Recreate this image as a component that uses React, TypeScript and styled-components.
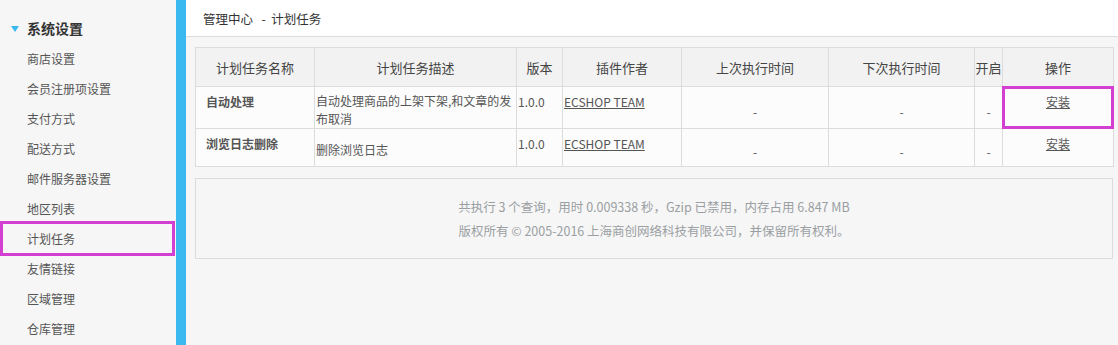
import React from "react";
import styled, { createGlobalStyle, css } from "styled-components";

const Global = createGlobalStyle`
  html, body { margin: 0; padding: 0; overflow: hidden; }
  body { font-family: "Noto Sans CJK SC", "Liberation Sans", sans-serif; background: #f6f6f6; }
  * { box-sizing: border-box; }
`;

const ACCENT = "#d33fd1";
const BLUE = "#3ab8f0";

const Page = styled.div`
  display: flex;
  height: 100vh;
  width: 100vw;
  overflow: hidden;
`;

const Sidebar = styled.nav`
  width: 176px;
  flex: none;
  background: #f6f6f6;
  padding-top: 13px;
  display: flex;
  flex-direction: column;
`;

const GroupTitle = styled.div`
  height: 30px;
  display: flex;
  align-items: center;
  padding-left: 11px;
  gap: 8px;
  font-size: 14px;
  font-weight: 700;
  color: #333;
`;

const Caret = styled.span`
  width: 0;
  height: 0;
  border-left: 4.5px solid transparent;
  border-right: 4.5px solid transparent;
  border-top: 6px solid ${BLUE};
  margin-top: 1px;
`;

const NavItem = styled.div<{ $marked?: boolean }>`
  position: relative;
  height: 30px;
  display: flex;
  align-items: center;
  padding-left: 27px;
  font-size: 12px;
  color: #555;
  ${(p) =>
    p.$marked &&
    css`
      &::after {
        content: "";
        position: absolute;
        left: 0;
        right: 1px;
        top: -2px;
        bottom: -3px;
        border: 3px solid ${ACCENT};
      }
    `}
`;

const Main = styled.main`
  flex: 1;
  min-width: 0;
  border-left: 10px solid ${BLUE};
  background: #f6f6f6;
  display: flex;
  flex-direction: column;
`;

const TopBar = styled.div`
  height: 37px;
  background: #fff;
  border-bottom: 1px solid #dcdcdc;
  display: flex;
  align-items: center;
  padding-left: 17px;
  font-size: 12.5px;
  color: #333;
  white-space: pre;
`;

const Content = styled.div`
  padding: 10px 5px 0 9px;
  display: flex;
  flex-direction: column;
  gap: 11px;
`;

const Table = styled.table`
  width: 918px;
  border-collapse: collapse;
  table-layout: fixed;
  background: #fcfcfc;
  border: 1px solid #dcdcdc;
`;

const Th = styled.th`
  height: 39px;
  background: #f2f2f2;
  border: 1px solid #dcdcdc;
  font-size: 13px;
  font-weight: 400;
  color: #444;
  text-align: center;
  padding: 0;
  white-space: nowrap;
`;

const Td = styled.td<{ $kind: "name" | "desc" | "plain" | "dash" | "action"; $marked?: boolean }>`
  position: relative;
  border: 1px solid #dcdcdc;
  font-size: 12px;
  line-height: 18px;
  color: #555;
  padding: 6px 0 0 1px;
  vertical-align: top;
  ${(p) =>
    p.$kind === "name" &&
    css`
      padding-left: 10px;
      font-weight: 700;
      color: #555;
    `}
  ${(p) =>
    p.$kind === "desc" &&
    css`
      vertical-align: middle;
      padding: 5px 0 0 1px;
    `}
  ${(p) =>
    p.$kind === "dash" &&
    css`
      vertical-align: middle;
      text-align: center;
      padding: 8px 0 0;
    `}
  ${(p) =>
    p.$kind === "action" &&
    css`
      text-align: center;
      padding-left: 0;
    `}
  ${(p) =>
    p.$marked &&
    css`
      &::after {
        content: "";
        position: absolute;
        inset: -1px;
        border: 3px solid ${ACCENT};
      }
    `}
`;

const Row = styled.tr<{ $h: number }>`
  height: ${(p) => p.$h}px;
`;

const Link = styled.a`
  color: #555;
  text-decoration: underline;
  cursor: pointer;
`;

const Footer = styled.div`
  width: 918px;
  height: 81px;
  border: 1px solid #dcdcdc;
  background: #f6f6f6;
  display: flex;
  flex-direction: column;
  align-items: center;
  justify-content: center;
  font-size: 12.5px;
  line-height: 24px;
  color: #9a9fa3;
`;

const cols = [119, 202, 46, 119, 147, 146, 28, 111];
const heads = ["计划任务名称", "计划任务描述", "版本", "插件作者", "上次执行时间", "下次执行时间", "开启", "操作"];

const rows = [
  { name: "自动处理", desc: "自动处理商品的上架下架,和文章的发布取消", h: 41, marked: true },
  { name: "浏览日志删除", desc: "删除浏览日志", h: 38, marked: false },
];

const navItems = [
  "商店设置",
  "会员注册项设置",
  "支付方式",
  "配送方式",
  "邮件服务器设置",
  "地区列表",
  "计划任务",
  "友情链接",
  "区域管理",
  "仓库管理",
];

export default function App() {
  return (
    <>
      <Global />
      <Page>
        <Sidebar>
          <GroupTitle>
            <Caret />
            系统设置
          </GroupTitle>
          {navItems.map((n) => (
            <NavItem key={n} $marked={n === "计划任务"}>
              {n}
            </NavItem>
          ))}
        </Sidebar>
        <Main>
          <TopBar>{"管理中心   -  计划任务"}</TopBar>
          <Content>
            <Table>
              <colgroup>
                {cols.map((w, i) => (
                  <col key={i} style={{ width: w }} />
                ))}
              </colgroup>
              <thead>
                <tr>
                  {heads.map((h) => (
                    <Th key={h}>{h}</Th>
                  ))}
                </tr>
              </thead>
              <tbody>
                {rows.map((r) => (
                  <Row key={r.name} $h={r.h}>
                    <Td $kind="name">{r.name}</Td>
                    <Td $kind="desc">{r.desc}</Td>
                    <Td $kind="plain">1.0.0</Td>
                    <Td $kind="plain">
                      <Link>ECSHOP TEAM</Link>
                    </Td>
                    <Td $kind="dash">-</Td>
                    <Td $kind="dash">-</Td>
                    <Td $kind="dash">-</Td>
                    <Td $kind="action" $marked={r.marked}>
                      <Link>安装</Link>
                    </Td>
                  </Row>
                ))}
              </tbody>
            </Table>
            <Footer>
              <div>共执行 3 个查询，用时 0.009338 秒，Gzip 已禁用，内存占用 6.847 MB</div>
              <div>版权所有 © 2005-2016 上海商创网络科技有限公司，并保留所有权利。</div>
            </Footer>
          </Content>
        </Main>
      </Page>
    </>
  );
}
